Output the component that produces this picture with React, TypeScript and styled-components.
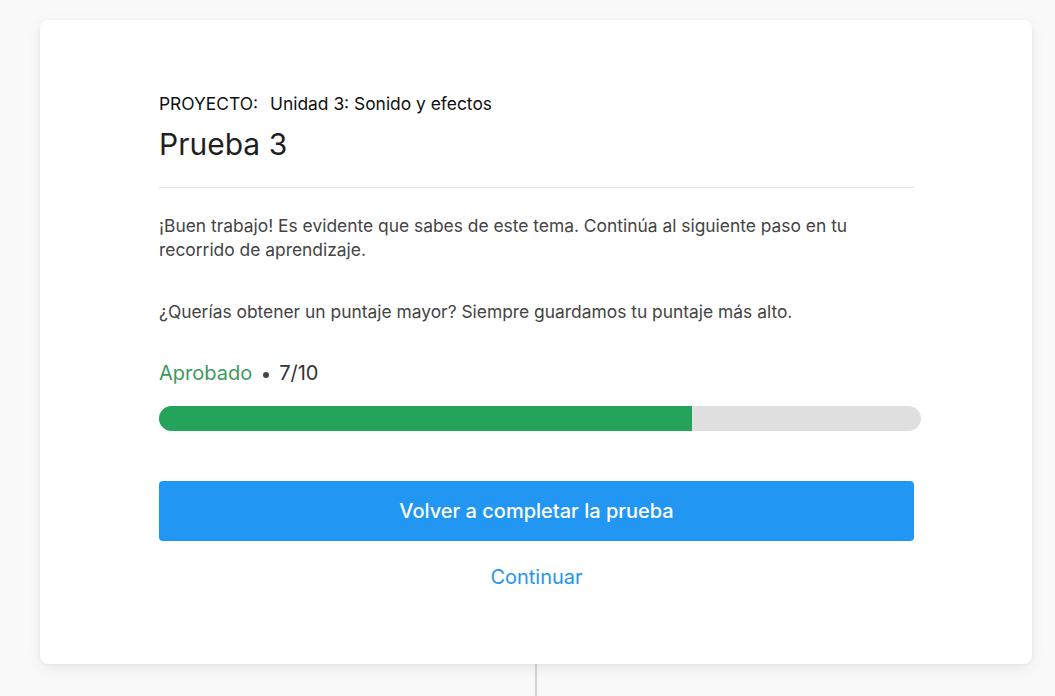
import React from "react";
import styled, { createGlobalStyle } from "styled-components";

const Global = createGlobalStyle`
  html, body { margin: 0; padding: 0; background: #f9f9f9; }
  body { font-family: Inter, "Noto Sans", sans-serif; color: #222; height: 696px; overflow: hidden; }
`;

const Page = styled.div`
  display: flex;
  flex-direction: column;
  align-items: center;
  padding: 20px 23px 0 40px;
`;

const Card = styled.section`
  width: 992px;
  box-sizing: border-box;
  background: #fff;
  border-radius: 8px;
  box-shadow: 0 4px 14px rgba(0, 0, 0, 0.08), 0 1px 3px rgba(0, 0, 0, 0.04);
  padding: 72px 118px 73px 119px;
  display: flex;
  flex-direction: column;
  position: relative;
  z-index: 1;
`;

const Connector = styled.div`
  width: 2px;
  height: 40px;
  background: #d4d4d4;
`;

const Eyebrow = styled.div`
  font-size: 17.4px;
  line-height: 24px;
  color: #111;
  display: flex;
  gap: 12px;
`;

const Title = styled.h1`
  margin: 9px 0 0;
  font-size: 30px;
  font-weight: 400;
  line-height: 38px;
  color: #1f1f1f;
`;

const Divider = styled.hr`
  border: none;
  border-top: 1px solid #e0e0e0;
  margin: 24px 0 0;
  width: 755px;
`;

const Para = styled.p<{ $gap: number }>`
  margin: ${(p) => p.$gap}px 0 0;
  font-size: 17.4px;
  line-height: 24px;
  color: #444;
  width: 755px;
`;

const Status = styled.div`
  margin-top: 35px;
  display: flex;
  align-items: center;
  font-size: 20px;
  line-height: 28px;
`;

const Passed = styled.span`
  color: #3a9b5e;
`;

const Dot = styled.span`
  width: 6px;
  height: 6px;
  border-radius: 50%;
  background: #444;
  margin: 4px 10px 0 11px;
`;

const Score = styled.span`
  color: #333;
`;

const Track = styled.div`
  margin-top: 19px;
  width: 762px;
  height: 25px;
  border-radius: 13px;
  background: #dfdfdf;
  overflow: hidden;
`;

const Fill = styled.div`
  height: 100%;
  background: #24a35a;
`;

const PrimaryButton = styled.button`
  margin-top: 50px;
  width: 755px;
  height: 60px;
  border: none;
  border-radius: 4px;
  background: #2196f3;
  color: #fff;
  font-family: inherit;
  font-size: 20px;
  font-weight: 500;
  cursor: pointer;
`;

const LinkButton = styled.button`
  margin-top: 22px;
  align-self: flex-start;
  width: 755px;
  border: none;
  background: none;
  padding: 0;
  font-family: inherit;
  font-size: 20px;
  line-height: 28px;
  color: #2196f3;
  cursor: pointer;
`;

export default function App() {
  const score = 7;
  const total = 10;
  return (
    <>
      <Global />
      <Page>
        <Card>
          <Eyebrow>
            <span>PROYECTO:</span>
            <span>Unidad 3: Sonido y efectos</span>
          </Eyebrow>
          <Title>Prueba 3</Title>
          <Divider />
          <Para $gap={26}>
            ¡Buen trabajo! Es evidente que sabes de este tema. Continúa al siguiente paso en tu
            recorrido de aprendizaje.
          </Para>
          <Para $gap={38}>
            ¿Querías obtener un puntaje mayor? Siempre guardamos tu puntaje más alto.
          </Para>
          <Status>
            <Passed>Aprobado</Passed>
            <Dot />
            <Score>
              {score}/{total}
            </Score>
          </Status>
          <Track>
            <Fill style={{ width: `${(score / total) * 100}%` }} />
          </Track>
          <PrimaryButton>Volver a completar la prueba</PrimaryButton>
          <LinkButton>Continuar</LinkButton>
        </Card>
        <Connector />
      </Page>
    </>
  );
}
